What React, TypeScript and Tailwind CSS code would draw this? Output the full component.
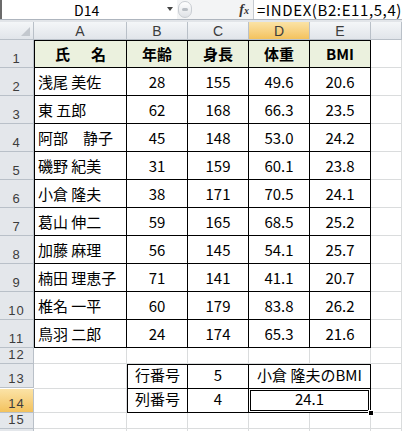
import type { ReactNode } from "react";

const people = [
  ["浅尾 美佐", "28", "155", "49.6", "20.6"],
  ["東 五郎", "62", "168", "66.3", "23.5"],
  ["阿部　静子", "45", "148", "53.0", "24.2"],
  ["磯野 紀美", "31", "159", "60.1", "23.8"],
  ["小倉 隆夫", "38", "171", "70.5", "24.1"],
  ["葛山 伸二", "59", "165", "68.5", "25.2"],
  ["加藤 麻理", "56", "145", "54.1", "25.7"],
  ["楠田 理恵子", "71", "141", "41.1", "20.7"],
  ["椎名 一平", "60", "179", "83.8", "26.2"],
  ["鳥羽 二郎", "24", "174", "65.3", "21.6"],
];

const grid = "border-r border-b border-[#dadcdd]";
const boxed = "border-r border-b border-black";

function ColHead({ label, active }: { label?: string; active?: boolean }) {
  return (
    <div
      className={`h-[18px] flex items-center justify-center border-r border-b border-[#b9c0c8] font-['Liberation_Sans',sans-serif] text-[14px] leading-none text-[#3c3c3c] bg-gradient-to-b ${
        active ? "from-[#fbe3a6] to-[#f3c25c]" : "from-[#f4f6f8] to-[#e1e5ea]"
      }`}
    >
      {label}
    </div>
  );
}

function RowHead({ n, h, active }: { n?: number; h: string; active?: boolean }) {
  return (
    <div
      className={`${h} flex items-end justify-center pb-px border-r border-b border-[#b9c0c8] font-['Liberation_Sans',sans-serif] text-[14px] leading-[14px] tracking-[1px] text-[#3c3c3c] ${
        active ? "bg-gradient-to-b from-[#fbe3a6] to-[#f3c25c]" : "bg-[#e4e7eb]"
      }`}
    >
      <span className="text-[13px]">{n}</span>
    </div>
  );
}

function Cell({ className = "", children }: { className?: string; children?: ReactNode }) {
  return <div className={`flex items-end pb-[3px] leading-[20px] text-[15px] ${className}`}>{children}</div>;
}

function Blank() {
  return <Cell className={grid} />;
}

export default function App() {
  return (
    <div className="w-[402px] h-[431px] overflow-hidden bg-white text-black font-['Noto_Sans_CJK_JP',sans-serif]">
      {/* formula bar */}
      <div className="h-[19px] flex border-l-2 border-[#6b6b6b]">
        <div className="w-[176px] relative flex items-center justify-center text-[14px] leading-none">
          <span className="-ml-[6px]">D14</span>
          <span className="absolute right-[4px] top-[7px] w-0 h-0 border-l-[3px] border-r-[3px] border-t-[4px] border-l-transparent border-r-transparent border-t-[#444]" />
        </div>
        <div className="w-[77px] flex items-center bg-[#f3f4f5] border-r border-[#c6cbd1]">
          <div className="ml-[1px] w-[14px] h-[17px] rounded-full border border-[#c9cdd2] bg-gradient-to-b from-white to-[#dfe2e6] flex items-center justify-center">
            <div className="w-[6px] h-[3px] rounded-full bg-[#b9bec4]" />
          </div>
          <span className="ml-auto mr-[4px] font-['Liberation_Serif',serif] italic font-bold text-[14px] leading-none text-[#333]">
            f<span className="text-[10px]">x</span>
          </span>
        </div>
        <div className="flex-1 flex items-center pl-[3px] text-[15px] leading-none tracking-[0.6px] whitespace-nowrap">
          =INDEX(B2:E11,5,4)
        </div>
      </div>
      <div className="h-[3px] bg-[#e2e5e9] border-t border-[#aeb5be]" />

      {/* sheet */}
      <div className="grid grid-cols-[34px_93px_61px_61px_61px_61px_1fr]">
        <div className="h-[18px] relative border-r border-b border-[#b9c0c8] bg-gradient-to-b from-[#f4f6f8] to-[#e1e5ea]">
          <div className="absolute right-[3px] bottom-[3px] w-0 h-0 border-b-[9px] border-l-[9px] border-b-[#c3c8ce] border-l-transparent" />
        </div>
        <ColHead label="A" />
        <ColHead label="B" />
        <ColHead label="C" />
        <ColHead label="D" active />
        <ColHead label="E" />
        <ColHead />

        {/* row 1 */}
        <RowHead n={1} h="h-[28px]" />
        <Cell className={`${boxed} border-t border-l justify-center gap-[21px] font-bold bg-[#ebf1de]`}>
          <span>氏</span>
          <span>名</span>
        </Cell>
        <Cell className={`${boxed} border-t justify-center font-bold bg-[#ebf1de]`}>年齢</Cell>
        <Cell className={`${boxed} border-t justify-center font-bold bg-[#ebf1de]`}>身長</Cell>
        <Cell className={`${boxed} border-t justify-center font-bold bg-[#ebf1de]`}>体重</Cell>
        <Cell className={`${boxed} border-t justify-center font-bold bg-[#ebf1de]`}>BMI</Cell>
        <Blank />

        {people.map((p, i) => (
          <div key={p[0]} className="contents">
            <RowHead n={i + 2} h="h-[28px]" />
            <Cell className={`${boxed} border-l pl-[3px]`}>{p[0]}</Cell>
            <Cell className={`${boxed} justify-center`}>{p[1]}</Cell>
            <Cell className={`${boxed} justify-center`}>{p[2]}</Cell>
            <Cell className={`${boxed} justify-center`}>{p[3]}</Cell>
            <Cell className={`${boxed} justify-center`}>{p[4]}</Cell>
            <Blank />
          </div>
        ))}

        {/* row 12 */}
        <RowHead n={12} h="h-[16px]" />
        <Blank />
        <Blank />
        <Blank />
        <Blank />
        <Blank />
        <Blank />

        {/* row 13 */}
        <RowHead n={13} h="h-[24px]" />
        <Blank />
        <Cell className={`${boxed} border-t border-l justify-center pb-[1px]`}>行番号</Cell>
        <Cell className={`${boxed} border-t justify-center pb-[1px]`}>5</Cell>
        <Cell className={`${boxed} border-t col-span-2 justify-center pb-[1px]`}>小倉 隆夫のBMI</Cell>
        <Blank />

        {/* row 14 */}
        <RowHead n={14} h="h-[24px]" active />
        <Blank />
        <Cell className={`${boxed} border-l justify-center pb-[1px]`}>列番号</Cell>
        <Cell className={`${boxed} justify-center pb-[1px]`}>4</Cell>
        <Cell
          className={`${boxed} border-t relative -mt-px col-span-2 justify-center pb-[1px] shadow-[inset_0_0_0_1px_#fff,inset_0_0_0_2px_#000]`}
        >
          24.1
          <span className="absolute -right-[4px] -bottom-[4px] w-[6px] h-[6px] bg-black border border-white" />
        </Cell>
        <Blank />

        {/* row 15 */}
        <RowHead n={15} h="h-[16px]" />
        <Blank />
        <Blank />
        <Blank />
        <Blank />
        <Blank />
        <Blank />

        <RowHead h="h-[16px]" />
        <Blank />
        <Blank />
        <Blank />
        <Blank />
        <Blank />
        <Blank />
      </div>
    </div>
  );
}
